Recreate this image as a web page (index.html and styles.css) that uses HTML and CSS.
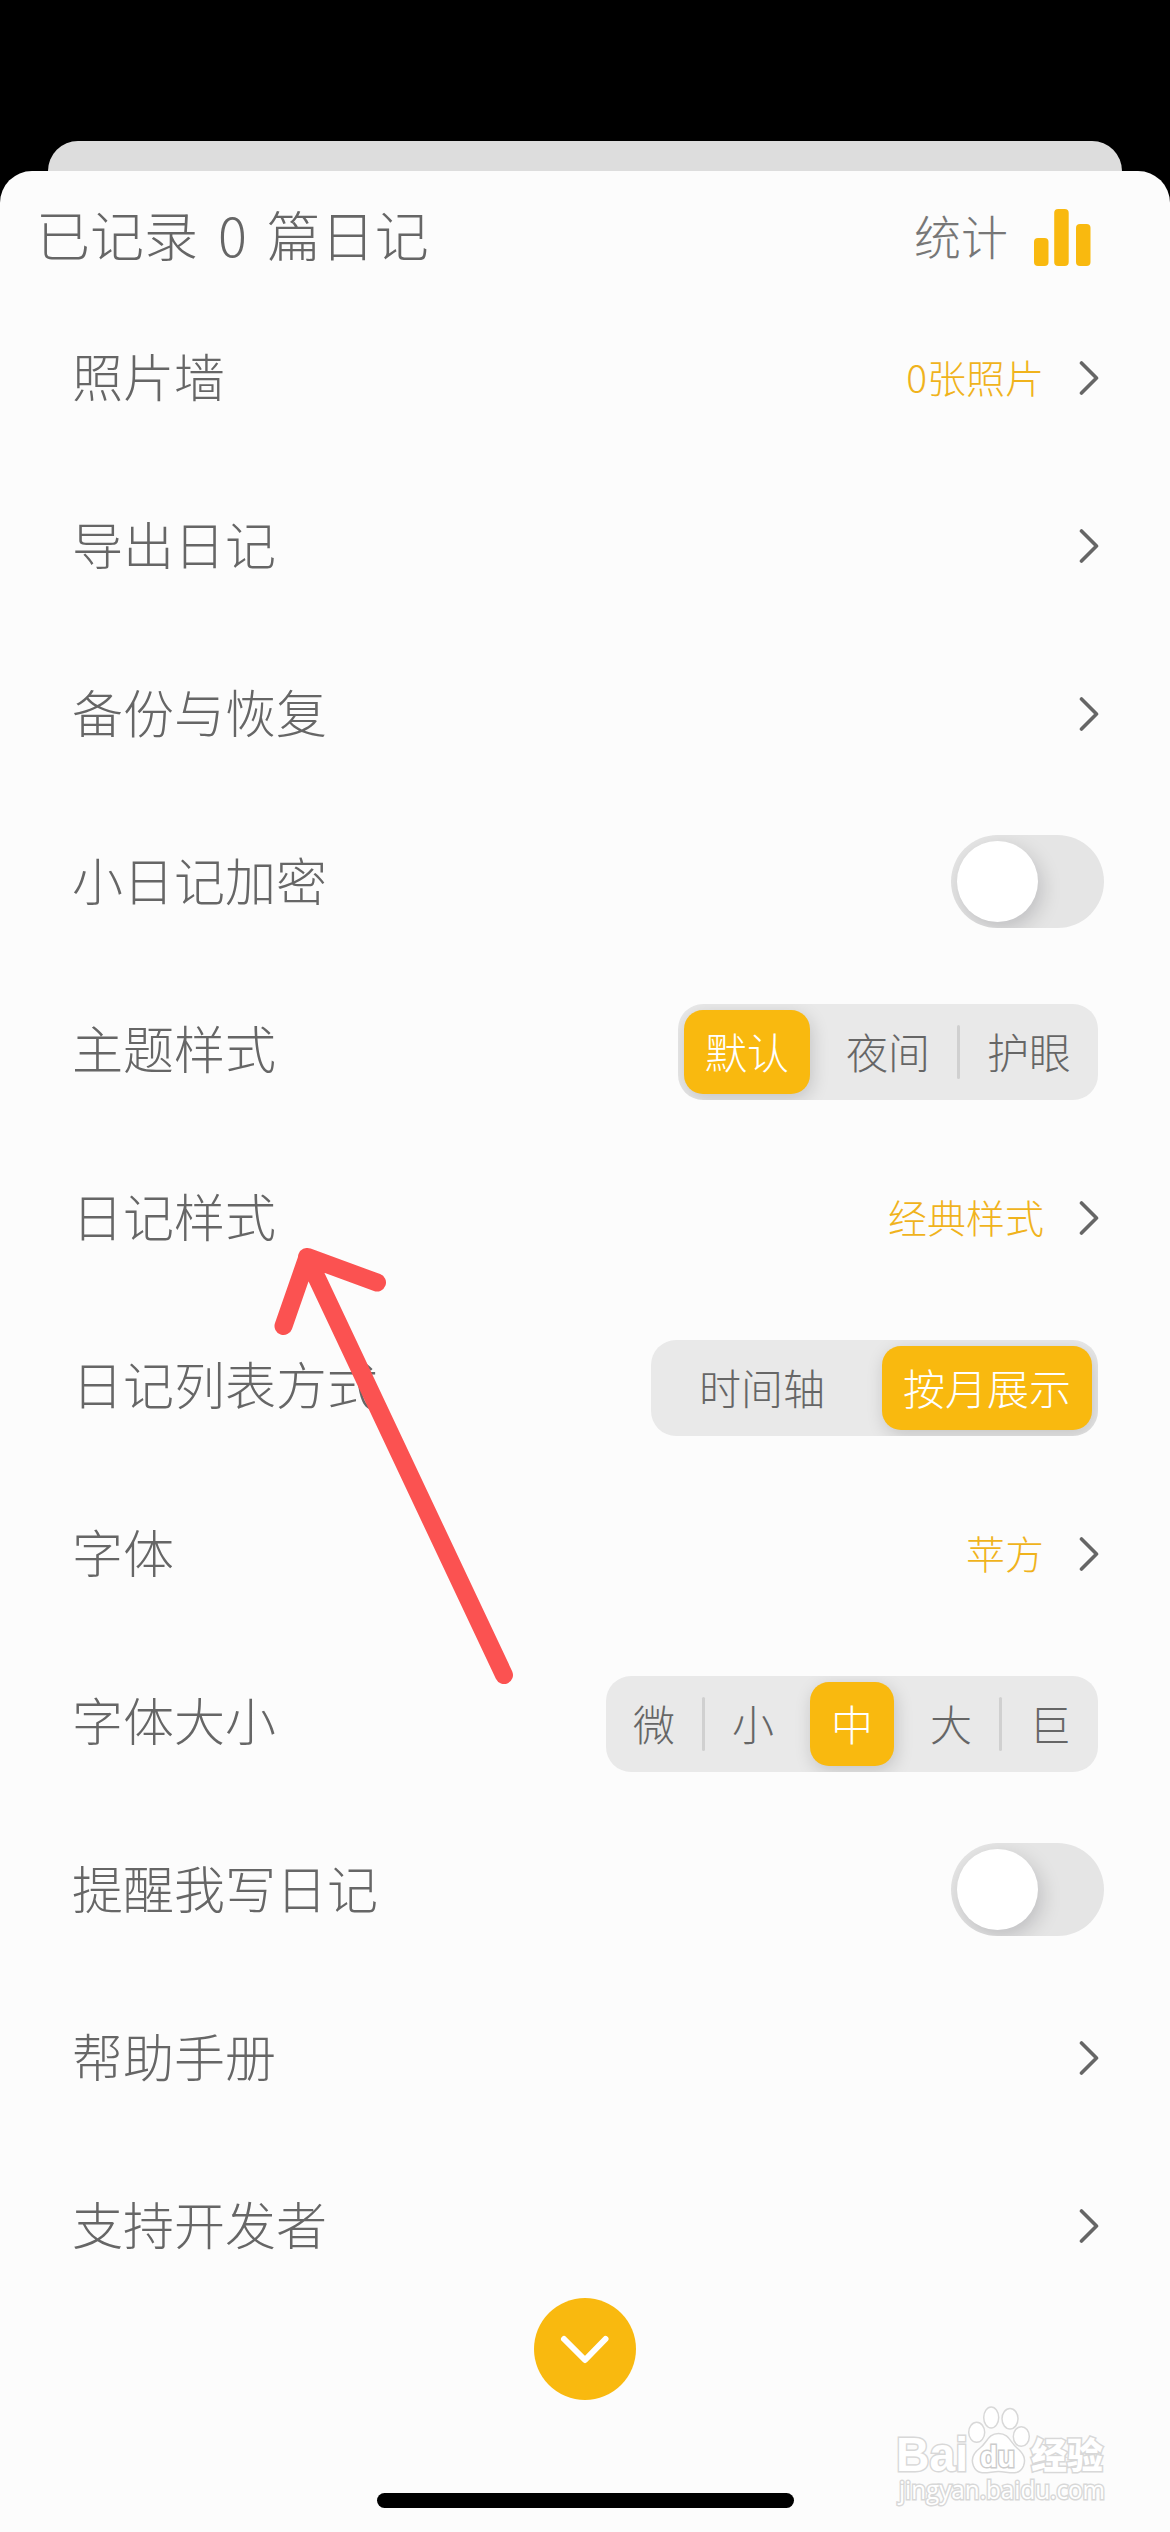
FILE: index.html
```html
<!DOCTYPE html>
<html lang="zh-CN">
<head>
<meta charset="utf-8">
<title>小日记</title>
<link rel="stylesheet" href="styles.css">
</head>
<body>
<div class="screen">
  <div class="sheet-behind"></div>
  <main class="sheet">
    <header class="header">
      <h1 class="title">已记录 <span class="count">0</span> 篇日记</h1>
      <div class="stats">
        <span class="stats-label">统计</span>
        <svg class="bars" viewBox="0 0 57 58"><rect x="0" y="29" width="14.5" height="28" rx="4"/><rect x="20.2" y="0" width="14.5" height="57" rx="4"/><rect x="42" y="15" width="14.5" height="42" rx="4"/></svg>
      </div>
    </header>

    <section class="list">
      <div class="row"><span class="label">照片墙</span><span class="value">0张照片</span><svg class="chevron" viewBox="0 0 20 36"><path d="M2.500 3 17.500 18 2.500 33"/></svg></div>
      <div class="row"><span class="label">导出日记</span><svg class="chevron" viewBox="0 0 20 36"><path d="M2.500 3 17.500 18 2.500 33"/></svg></div>
      <div class="row"><span class="label">备份与恢复</span><svg class="chevron" viewBox="0 0 20 36"><path d="M2.500 3 17.500 18 2.500 33"/></svg></div>
      <div class="row"><span class="label">小日记加密</span><span class="toggle"><i class="knob"></i></span></div>
      <div class="row"><span class="label">主题样式</span>
        <div class="segments medium"><span class="seg active">默认</span><span class="gap"></span><span class="seg">夜间</span><span class="gap line"></span><span class="seg">护眼</span></div>
      </div>
      <div class="row"><span class="label">日记样式</span><span class="value">经典样式</span><svg class="chevron" viewBox="0 0 20 36"><path d="M2.500 3 17.500 18 2.500 33"/></svg></div>
      <div class="row"><span class="label">日记列表方式</span>
        <div class="segments wide"><span class="seg">时间轴</span><span class="gap"></span><span class="seg active">按月展示</span></div>
      </div>
      <div class="row"><span class="label">字体</span><span class="value">苹方</span><svg class="chevron" viewBox="0 0 20 36"><path d="M2.500 3 17.500 18 2.500 33"/></svg></div>
      <div class="row"><span class="label">字体大小</span>
        <div class="segments small"><span class="seg">微</span><span class="gap line"></span><span class="seg">小</span><span class="gap"></span><span class="seg active">中</span><span class="gap"></span><span class="seg">大</span><span class="gap line"></span><span class="seg">巨</span></div>
      </div>
      <div class="row"><span class="label">提醒我写日记</span><span class="toggle"><i class="knob"></i></span></div>
      <div class="row"><span class="label">帮助手册</span><svg class="chevron" viewBox="0 0 20 36"><path d="M2.500 3 17.500 18 2.500 33"/></svg></div>
      <div class="row"><span class="label">支持开发者</span><svg class="chevron" viewBox="0 0 20 36"><path d="M2.500 3 17.500 18 2.500 33"/></svg></div>
    </section>

    <button class="collapse"><svg viewBox="0 0 102 102"><path d="M30 41 51 62 71.500 41"/></svg></button>
    <div class="home-bar"></div>
  </main>

  <svg class="arrow" viewBox="0 0 260 460"><path d="M237 435 40 17M16.500 86 40.500 17 110 42.500"/></svg>

  <svg class="watermark" viewBox="0 0 230 120">
    <text class="latin" x="6" y="71" textLength="72" lengthAdjust="spacingAndGlyphs">Bai</text>
    <ellipse cx="86.700" cy="32.300" rx="8" ry="10"/>
    <ellipse cx="101.200" cy="17.500" rx="7.500" ry="10.500"/>
    <ellipse cx="120" cy="18.800" rx="8" ry="10.300"/>
    <ellipse cx="131.300" cy="36.500" rx="8" ry="9.800"/>
    <path d="M108.500 33.500C98 33.500 97 43 90 48C82 54 81 60 83.500 66C88 77 99 71.500 108.500 71.500C118 71.500 129 77 133.500 66C136 59 134 54 127 48C120 42 119 33.500 108.500 33.500Z"/>
    <text class="du" x="90" y="67" textLength="35" lengthAdjust="spacingAndGlyphs">du</text>
    <text class="hanzi" x="141" y="68.500">经验</text>
    <text class="url" x="9" y="99" textLength="206" lengthAdjust="spacingAndGlyphs">jingyan.baidu.com</text>
  </svg>
</div>
</body>
</html>
```
FILE: styles.css
```css
* { box-sizing: border-box; }
body {
  margin: 0;
  background: #000;
  font-family: "Noto Sans CJK SC", sans-serif;
  font-weight: 300;
  color: #666;
}
.screen {
  position: relative;
  width: 1170px;
  height: 2532px;
  padding-top: 141px;
  overflow: hidden;
  background: #000;
}
.sheet-behind {
  height: 60px;
  margin: 0 48px -30px;
  border-radius: 30px 30px 0 0;
  background: #ddd;
}
.sheet {
  position: relative;
  display: flex;
  flex-direction: column;
  height: 2361px;
  border-radius: 32px 32px 0 0;
  background: #fcfcfc;
}
.header {
  display: flex;
  justify-content: space-between;
  align-items: center;
  height: 123px;
  padding: 10px 79px 0 36px;
}
.title {
  margin: 0;
  padding-bottom: 7px;
  font-size: 54px;
  font-weight: 300;
  line-height: 80px;
  white-space: pre;
  word-spacing: 5px;
}
.count { padding: 0 3px; }
.stats {
  display: flex;
  align-items: center;
  gap: 26px;
  font-size: 47px;
  line-height: 70px;
  color: #777;
}
.stats-label { padding-bottom: 5px; }
.bars { width: 57px; height: 58px; fill: #f9b90f; }
.list { display: flex; flex-direction: column; }
.row {
  display: flex;
  align-items: center;
  height: 168px;
  padding: 0 71px 0 72px;
}
.label {
  flex: 1;
  padding-bottom: 6px;
  font-size: 51px;
  line-height: 74px;
}
.value {
  margin-right: 35px;
  padding-bottom: 4px;
  font-size: 39px;
  line-height: 58px;
  color: #f0b31c;
}
.chevron {
  width: 20px;
  height: 36px;
  fill: none;
  stroke: #666;
  stroke-width: 3.6;
  stroke-linecap: round;
  stroke-linejoin: round;
}
.toggle {
  width: 153px;
  height: 93px;
  margin: -2px -5px 0 0;
  padding: 6px;
  border-radius: 47px;
  background: #e5e5e5;
  overflow: hidden;
}
.knob {
  display: block;
  width: 81px;
  height: 81px;
  border-radius: 50%;
  background: #fff;
  box-shadow: 4px 7px 20px rgba(0, 0, 20, .17);
}
.segments {
  display: flex;
  height: 96px;
  margin: 3px 1px 0 0;
  padding: 6px;
  border-radius: 25px;
  background: #e9e9e9;
  overflow: hidden;
}
.seg {
  display: flex;
  align-items: center;
  justify-content: center;
  height: 84px;
  padding-bottom: 2px;
  border-radius: 19px;
  font-size: 42px;
}
.small .seg { width: 84px; }
.medium .seg { width: 126px; }
.wide .seg { width: 210px; }
.seg.active {
  background: #f9b90f;
  color: #fff;
  box-shadow: 2px 5px 18px rgba(0, 0, 0, .16);
}
.gap {
  display: flex;
  justify-content: center;
  align-items: center;
  width: 15px;
}
.line::before {
  content: "";
  width: 3px;
  height: 54px;
  border-radius: 2px;
  background: #d0d0d0;
}
.collapse {
  align-self: center;
  width: 102px;
  height: 102px;
  margin: -12px 0 0;
  padding: 0;
  border: 0;
  border-radius: 50%;
  background: #f9b90f;
}
.collapse svg {
  display: block;
  fill: none;
  stroke: #fff;
  stroke-width: 6;
  stroke-linecap: round;
  stroke-linejoin: round;
}
.home-bar {
  align-self: center;
  width: 417px;
  height: 15px;
  margin-top: 93px;
  border-radius: 8px;
  background: #000;
}
.arrow {
  position: absolute;
  left: 267px;
  top: 1240px;
  width: 260px;
  height: 460px;
  fill: none;
  stroke: #fb5251;
  stroke-width: 18;
  stroke-linecap: round;
  stroke-linejoin: round;
}
.watermark {
  position: absolute;
  left: 890px;
  top: 2400px;
  width: 230px;
  height: 120px;
  fill: #fff;
  stroke: #d8d8d8;
  stroke-width: 1.5;
}
.watermark text { paint-order: stroke; stroke-width: 3; }
.latin, .du { font-family: "Liberation Sans", sans-serif; font-weight: 700; }
.latin { font-size: 48px; }
.watermark .du { font-size: 30px; stroke: #ccc; }
.hanzi { font-size: 36px; font-weight: 900; }
.url { font-family: "Open Sans", sans-serif; font-size: 25px; font-weight: 400; }
```
